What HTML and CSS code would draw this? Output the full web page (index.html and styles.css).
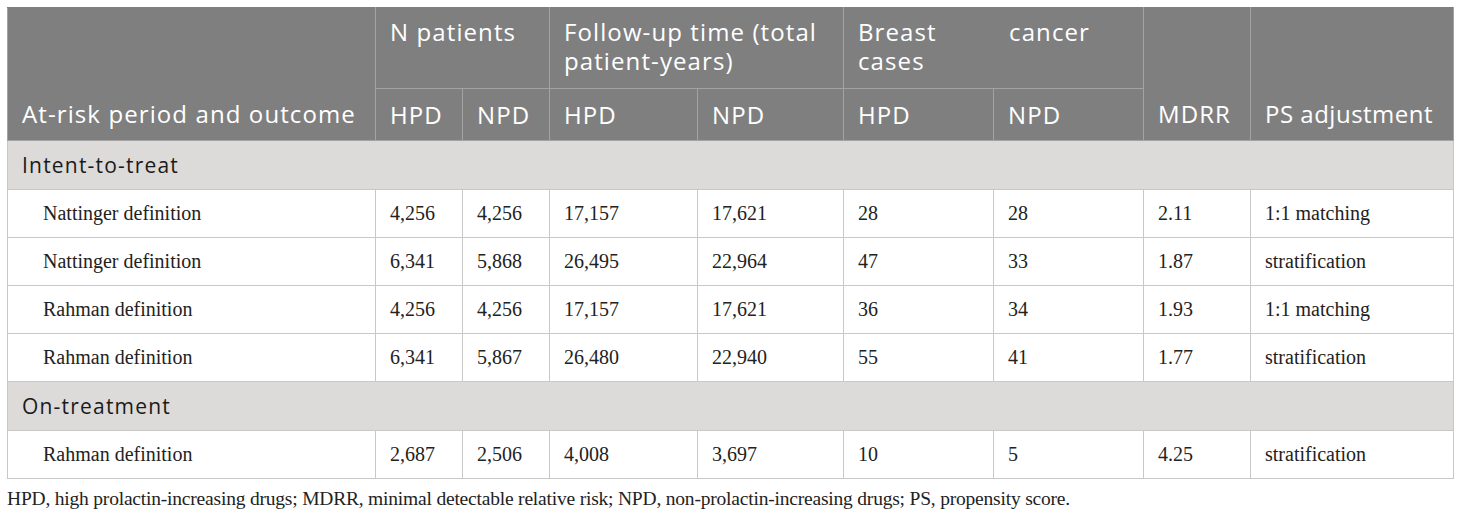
FILE: index.html
```html
<!DOCTYPE html>
<html>
<head>
<meta charset="utf-8">
<link rel="stylesheet" href="styles.css">
</head>
<body>
<table class="tbl">
  <colgroup>
    <col class="c1"><col class="c2"><col class="c3"><col class="c4"><col class="c5"><col class="c6"><col class="c7"><col class="c8"><col class="c9">
  </colgroup>
  <thead>
    <tr class="h1">
      <th rowspan="2" class="bottom">At-risk period and outcome</th>
      <th colspan="2" class="top">N patients</th>
      <th colspan="2" class="top">Follow-up time (total patient-years)</th>
      <th colspan="2" class="top"><div class="just">Breast cancer cases</div></th>
      <th rowspan="2" class="bottom">MDRR</th>
      <th rowspan="2" class="bottom nowrap">PS adjustment</th>
    </tr>
    <tr class="h2">
      <th>HPD</th><th>NPD</th><th>HPD</th><th>NPD</th><th>HPD</th><th>NPD</th>
    </tr>
  </thead>
  <tbody>
    <tr class="sec"><td colspan="9">Intent-to-treat</td></tr>
    <tr><td class="lbl">Nattinger definition</td><td>4,256</td><td>4,256</td><td>17,157</td><td>17,621</td><td>28</td><td>28</td><td>2.11</td><td>1:1 matching</td></tr>
    <tr><td class="lbl">Nattinger definition</td><td>6,341</td><td>5,868</td><td>26,495</td><td>22,964</td><td>47</td><td>33</td><td>1.87</td><td>stratification</td></tr>
    <tr><td class="lbl">Rahman definition</td><td>4,256</td><td>4,256</td><td>17,157</td><td>17,621</td><td>36</td><td>34</td><td>1.93</td><td>1:1 matching</td></tr>
    <tr><td class="lbl">Rahman definition</td><td>6,341</td><td>5,867</td><td>26,480</td><td>22,940</td><td>55</td><td>41</td><td>1.77</td><td>stratification</td></tr>
    <tr class="sec"><td colspan="9">On-treatment</td></tr>
    <tr><td class="lbl">Rahman definition</td><td>2,687</td><td>2,506</td><td>4,008</td><td>3,697</td><td>10</td><td>5</td><td>4.25</td><td>stratification</td></tr>
  </tbody>
</table>
<p class="note">HPD, high prolactin-increasing drugs; MDRR, minimal detectable relative risk; NPD, non-prolactin-increasing drugs; PS, propensity score.</p>
</body>
</html>
```
FILE: styles.css
```css
html, body { margin: 0; padding: 0; background: #fff; }
body { padding: 7px 7px 0 7px; }
.tbl {
  border-collapse: collapse;
  table-layout: fixed;
  width: 1446px;
  border: 1px solid #c4c4c4;
}
.c1 { width: 368px; } .c2 { width: 87px; } .c3 { width: 87px; } .c4 { width: 148px; }
.c5 { width: 146px; } .c6 { width: 150px; } .c7 { width: 150px; } .c8 { width: 107px; } .c9 { width: 203px; }
th {
  background: #7f7f7f;
  color: #fff;
  font-family: "Open Sans", "DejaVu Sans", sans-serif;
  font-weight: 400;
  font-size: 24px;
  letter-spacing: 1.1px;
  line-height: 29px;
  text-align: left;
  padding: 0 13px 0 14px;
  border: 1px solid #a3a3a3;
}
thead tr:first-child th { border-top-color: #7f7f7f; }
.h1 { height: 81px; }
.h2 { height: 52px; }
th.top { vertical-align: top; padding-top: 9px; }
th.bottom { vertical-align: bottom; padding-bottom: 12px; }
th.nowrap { white-space: nowrap; letter-spacing: 0.5px; padding-right: 4px; }
.h2 th { vertical-align: middle; padding-top: 0; }
.just { width: 232px; text-align: justify; }
td {
  font-family: "Liberation Serif", "Times New Roman", serif;
  font-size: 20px;
  color: #222;
  padding: 0 14px;
  border: 1px solid #c8c8c8;
  height: 47px;
  vertical-align: middle;
}
td.lbl { padding-left: 35px; }
.sec td {
  background: #dcdbd9;
  font-family: "Open Sans", "DejaVu Sans", sans-serif;
  font-size: 21px;
  letter-spacing: 1.2px;
  color: #1a1a1a;
  height: 48px;
  padding-left: 14px;
}
.note {
  margin: 9px 0 0 0;
  font-family: "Liberation Serif", "Times New Roman", serif;
  font-size: 19.5px;
  color: #222;
  letter-spacing: -0.2px;
}
```
